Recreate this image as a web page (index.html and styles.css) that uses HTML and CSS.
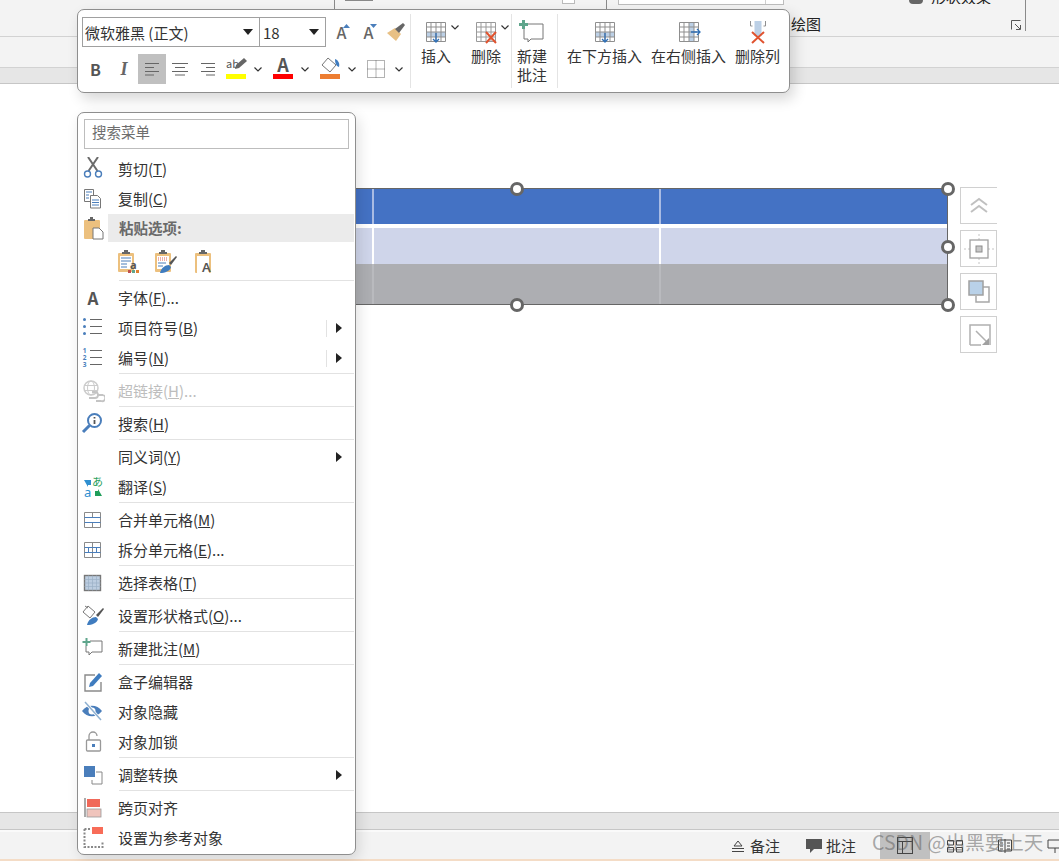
FILE: index.html
```html
<!DOCTYPE html>
<html lang="zh-CN">
<head>
<meta charset="utf-8">
<title>表格右键菜单</title>
<link rel="stylesheet" href="styles.css">
</head>
<body>
<div class="app">
  <header class="ribbon">
    <div class="rb-sec rb-a"></div>
    <div class="rb-sec rb-b"><span class="rb-stub"></span><span class="rb-mini"></span></div>
    <div class="rb-sec rb-c">
      <div class="rb-top">
        <div class="rb-combo"><span class="rb-combo-btn"></span></div>
        <div class="rb-effect"><span class="rb-dot"></span><span class="rb-clip">形状效果</span></div>
      </div>
      <div class="rb-bottom">
        <span class="rb-label">绘图</span>
        <svg class="rb-launch" width="12" height="12" viewBox="0 0 12 12"><path d="M1.500 10.500V1.500H10.500M5 5l5 5M10.500 6v4.500H6" fill="none" stroke="#555" stroke-width="1"/></svg>
      </div>
    </div>
  </header>
  <div class="subbar"></div>
  <div class="hscroll"></div>

  <main class="canvas">
    <div class="shape">
      <div class="trow r1"><i></i><i></i><i></i></div>
      <div class="trow r2"><i></i><i></i><i></i></div>
      <div class="trow r3"><i></i><i></i><i></i></div>
      <span class="h h-tc"></span><span class="h h-tr"></span><span class="h h-mr"></span><span class="h h-bc"></span><span class="h h-br"></span>
    </div>
    <div class="side">
      <div class="sb sb-open"><svg width="24" height="24" viewBox="0 0 24 24"><path d="M4 11l8-6 8 6M4 18l8-6 8 6" fill="none" stroke="#c0c0c0" stroke-width="2"/></svg></div>
      <div class="sb"><svg width="32" height="32" viewBox="0 0 32 32"><path d="M16 1v30M1 16h30" stroke="#c4c4c4" stroke-width="1" stroke-dasharray="2 2"/><rect x="7" y="7" width="18" height="18" fill="#fff" stroke="#a0a0a0" stroke-width="1.300"/><rect x="13" y="13" width="6" height="6" fill="#c8c8c8" stroke="#8c8c8c"/></svg></div>
      <div class="sb"><svg width="28" height="28" viewBox="0 0 28 28"><path d="M18 9h6v15H11v-6" fill="none" stroke="#a8a8a8" stroke-width="1.500"/><rect x="4" y="3" width="14" height="14" fill="#b9d1e8" stroke="#a0a0a0" stroke-width="1.500"/></svg></div>
      <div class="sb"><svg width="28" height="28" viewBox="0 0 28 28"><path d="M5 24V4h20v20" fill="none" stroke="#b0b0b0" stroke-width="1.500"/><path d="M5 24h11M11 10l12 12" fill="none" stroke="#b0b0b0" stroke-width="1.500"/><path d="M24 24h-7l7-7z" fill="#a0a0a0"/></svg></div>
    </div>
  </main>

  <div class="hscroll2"></div>
  <footer class="status">
    <span class="st-item"><svg width="14" height="14" viewBox="0 0 14 14"><path d="M1 9.500h12M1 12.500h12" stroke="#444"/><path d="M3 7l4-5 4 5z" fill="none" stroke="#444"/></svg>备注</span>
    <span class="st-item st-c"><svg width="18" height="16" viewBox="0 0 18 16"><path d="M1 1h16v10H9l-4 4v-4H1z" fill="#555"/></svg>批注</span>
    <span class="st-view st-on"><svg width="18" height="18" viewBox="0 0 18 18"><rect x="1.500" y=".5" width="15" height="16" fill="none" stroke="#444"/><path d="M1.500 4.500h15M6.500 4.500v12" stroke="#444"/></svg></span>
    <span class="st-view st-sort"><svg width="18" height="14" viewBox="0 0 18 14"><path d="M1.500 1.500h6v4.500h-6zM10.500 1.500h6v4.500h-6zM1.500 8.500h6v4.500h-6zM10.500 8.500h6v4.500h-6z" fill="none" stroke="#444"/></svg></span>
    <span class="st-view"><svg width="16" height="18" viewBox="0 0 16 18"><path d="M8 2v14M8 3H1.500v11H8M8 3h6.500v11H8M3 6h3M3 9h3M3 12h3M10 6h3M10 9h3M10 12h3" fill="none" stroke="#444"/></svg></span>
    <span class="st-view st-last"><svg width="18" height="18" viewBox="0 0 18 18"><path d="M2 3h14v8H2zM9 11v5" fill="none" stroke="#444"/></svg></span>
  </footer>
  <div class="st-edge"></div>
</div>

<div class="watermark">CSDN @出黑要上天</div>

<section class="mini">
  <div class="fmt">
    <div class="fmt-row">
      <div class="combo combo-font"><span>微软雅黑 (正文)</span><b class="caret"></b></div>
      <div class="combo combo-size"><span>18</span><b class="caret"></b></div>
      <span class="grow"><em class="aa">A</em><svg class="aa-tri" width="7" height="4" viewBox="0 0 7 4"><path d="M0 4l3.500-4L7 4z" fill="#4a7ebb"/></svg></span>
      <span class="grow"><em class="aa">A</em><svg class="aa-tri" width="7" height="4" viewBox="0 0 7 4"><path d="M0 0l3.500 4L7 0z" fill="#4a7ebb"/></svg></span>
      <span class="brush"><svg width="20" height="20" viewBox="0 0 20 20"><path d="M1 11l8-5 6 6-5 7z" fill="#e8c084"/><path d="M9 7l8-6 2 2-6 8z" fill="#666"/></svg></span>
    </div>
    <div class="fmt-row row2">
      <span class="tb tb-b">B</span>
      <span class="tb tb-i">I</span>
      <span class="tb tb-on"><svg width="16" height="14" viewBox="0 0 16 14"><path d="M1 1.500h14M1 5.500h9M1 9.500h14M1 13h9" stroke="#666"/></svg></span>
      <span class="tb"><svg width="16" height="14" viewBox="0 0 16 14"><path d="M0 1.500h16M3 5.500h10M0 9.500h16M3 13h10" stroke="#666"/></svg></span>
      <span class="tb"><svg width="16" height="14" viewBox="0 0 16 14"><path d="M1 1.500h14M6 5.500h9M1 9.500h14M6 13h9" stroke="#666"/></svg></span>
      <span class="tb tb-col"><em class="ab">ab</em><svg class="ab-pen" width="14" height="14" viewBox="0 0 14 14"><path d="M1 12l1-4 8-7 3 3-8 7z" fill="#666"/></svg><u class="bar bar-y"></u></span>
      <span class="chev"><svg width="8" height="5" viewBox="0 0 8 5"><path d="M.5.500L4 4 7.500.500" fill="none" stroke="#333" stroke-width="1.200"/></svg></span>
      <span class="tb tb-col gap3"><em class="fa">A</em><u class="bar bar-r"></u></span>
      <span class="chev"><svg width="8" height="5" viewBox="0 0 8 5"><path d="M.5.500L4 4 7.500.500" fill="none" stroke="#333" stroke-width="1.200"/></svg></span>
      <span class="tb tb-col gap3"><svg class="fill" width="20" height="17" viewBox="0 0 20 17"><path d="M8 1l8 7-6 7-8-7z" fill="#fff" stroke="#777"/><path d="M15 2c3 1 5 4 4 8-3-1-4-4-4-8z" fill="#3f7cbf"/></svg><u class="bar bar-o"></u></span>
      <span class="chev"><svg width="8" height="5" viewBox="0 0 8 5"><path d="M.5.500L4 4 7.500.500" fill="none" stroke="#333" stroke-width="1.200"/></svg></span>
      <span class="tb gap2"><svg width="18" height="18" viewBox="0 0 18 18"><path d="M.5.500h17v17H.5zM9 .5v17M.5 9h17" fill="none" stroke="#666" stroke-dasharray="1 1"/></svg></span>
      <span class="chev"><svg width="8" height="5" viewBox="0 0 8 5"><path d="M.5.500L4 4 7.500.500" fill="none" stroke="#333" stroke-width="1.200"/></svg></span>
    </div>
  </div>

  <div class="tg tg-ins">
    <div class="tbtn tbtn-w">
      <span class="ti"><svg width="24" height="24" viewBox="0 0 24 24"><rect x="2.500" y="12" width="19" height="5" fill="#bcd0e6"/><path d="M2.500 2.500h19v19h-19zM2.500 7h19M2.500 12h19M2.500 17h19M7 2.500v19M12 2.500v19M17 2.500v19" fill="none" stroke="#8f8f8f"/><path d="M12 13v9M9 19l3 3 3-3" fill="none" stroke="#2f6fb5" stroke-width="1.300"/></svg><svg class="tchev" width="8" height="5" viewBox="0 0 8 5"><path d="M.5.500L4 4 7.500.500" fill="none" stroke="#333" stroke-width="1.200"/></svg></span>
      <span class="tl">插入</span>
    </div>
    <div class="tbtn tbtn-w">
      <span class="ti"><svg width="24" height="24" viewBox="0 0 24 24"><path d="M2.500 2.500h19v19h-19zM2.500 7h19M2.500 12h19M2.500 17h19M7 2.500v19M12 2.500v19M17 2.500v19" fill="none" stroke="#9a9a9a"/><path d="M12 12l10 11M22 12L12 23" stroke="#e0532f" stroke-width="2"/></svg><svg class="tchev" width="8" height="5" viewBox="0 0 8 5"><path d="M.5.500L4 4 7.500.500" fill="none" stroke="#333" stroke-width="1.200"/></svg></span>
      <span class="tl">删除</span>
    </div>
  </div>
  <div class="tg tg-new">
    <div class="tbtn">
      <span class="ti"><svg width="26" height="24" viewBox="0 0 26 24"><path d="M9 4h15v15H12l-3 3v-3H5V9" fill="#fff" stroke="#777"/><path d="M4.500 0v9M0 4.500h9" stroke="#5fa58c" stroke-width="3"/></svg></span>
      <span class="tl">新建<br>批注</span>
    </div>
  </div>
  <div class="tg tg-row">
    <div class="tbtn">
      <span class="ti"><svg width="24" height="24" viewBox="0 0 24 24"><rect x="2.500" y="12" width="19" height="5" fill="#bcd0e6"/><path d="M2.500 2.500h19v19h-19zM2.500 7h19M2.500 12h19M2.500 17h19M7 2.500v19M12 2.500v19M17 2.500v19" fill="none" stroke="#8f8f8f"/><path d="M12 13v9M9 19l3 3 3-3" fill="none" stroke="#2f6fb5" stroke-width="1.300"/></svg></span>
      <span class="tl">在下方插入</span>
    </div>
    <div class="tbtn">
      <span class="ti"><svg width="24" height="24" viewBox="0 0 24 24"><rect x="12" y="2.500" width="5" height="19" fill="#bcd0e6"/><path d="M2.500 2.500h19v19h-19zM2.500 7h19M2.500 12h19M2.500 17h19M7 2.500v19M12 2.500v19M17 2.500v19" fill="none" stroke="#8f8f8f"/><path d="M14 12h9M20 9l3 3-3 3" fill="#fff" stroke="#2f6fb5" stroke-width="1.300"/></svg></span>
      <span class="tl">在右侧插入</span>
    </div>
    <div class="tbtn">
      <span class="ti"><svg width="24" height="24" viewBox="0 0 24 24"><rect x="8.500" y="1" width="7" height="15" fill="#bcd0e6"/><path d="M4.500 6V1M19.500 6V1M4.500 6h2M19.500 6h-2" fill="none" stroke="#8f8f8f"/><path d="M6 12l12 11M18 12L6 23" stroke="#e0532f" stroke-width="2"/></svg></span>
      <span class="tl">删除列</span>
    </div>
  </div>
</section>

<nav class="ctx">
  <div class="search">搜索菜单</div>

  <div class="item"><span class="ico"><svg width="24" height="24" viewBox="0 0 24 24"><path d="M7.500 14L17 0M16.500 14L7 0" stroke="#6b6b6b" stroke-width="2"/><circle cx="6.500" cy="17" r="3" fill="none" stroke="#4a7ebb" stroke-width="1.400"/><circle cx="17.500" cy="17" r="3" fill="none" stroke="#4a7ebb" stroke-width="1.400"/></svg></span><span class="lbl">剪切(<u>T</u>)</span></div>
  <div class="item"><span class="ico"><svg width="24" height="24" viewBox="0 0 24 24"><path d="M3.500 2.500h9v12h-9z" fill="#fff" stroke="#777"/><path d="M9.500 8.500h7l3 3v9.500h-10z" fill="#fff" stroke="#777"/><path d="M5 5h6M5 8h3M5 11h3M11 13h7M11 15.500h7M11 18h7" stroke="#4a7ebb"/></svg></span><span class="lbl">复制(<u>C</u>)</span></div>
  <div class="item item-head"><span class="ico"><svg width="24" height="24" viewBox="0 0 24 24"><rect x="3" y="4" width="16" height="19" rx="1" fill="#ecc07e"/><path d="M7 5V3h2V1h3v2h2v2z" fill="#666"/><path d="M12 12h6l4 4v7H12z" fill="#fff" stroke="#777"/></svg></span><span class="head">粘贴选项:</span></div>
  <div class="pastes">
    <svg width="24" height="24" viewBox="0 0 24 24"><rect x="2" y="3" width="16" height="19" rx="1" fill="#ecc07e"/><rect x="4" y="6" width="12" height="13" fill="#fff"/><path d="M6 4V2h2V0h4v2h2v2z" fill="#666"/><path d="M5 8h10M5 11h10M5 14h6M5 17h6" stroke="#4a7ebb"/><rect x="12" y="20" width="3" height="3" fill="#c0504d"/><rect x="16" y="20" width="3" height="3" fill="#5fa58c"/><rect x="20" y="20" width="3" height="3" fill="#e08030"/><text x="14" y="19" class="svgt">a</text></svg>
    <svg width="24" height="24" viewBox="0 0 24 24"><rect x="1" y="3" width="16" height="19" rx="1" fill="#ecc07e"/><rect x="3" y="6" width="12" height="13" fill="#fff"/><path d="M5 4V2h2V0h4v2h2v2z" fill="#666"/><path d="M4 8h10M4 10h10" stroke="#e06050" stroke-dasharray="1 1"/><path d="M4 13h8M4 16h5" stroke="#4a7ebb"/><path d="M15 13l7-7 1 1-6 8z" fill="#555"/><path d="M6 23c1-5 5-8 9-8l2 2c-1 4-6 6-11 6z" fill="#3f7cbf"/></svg>
    <svg width="24" height="24" viewBox="0 0 24 24"><rect x="3" y="3" width="16" height="20" rx="1" fill="#ecc07e"/><rect x="5" y="6" width="12" height="17" fill="#fff"/><path d="M7 4V2h2V0h4v2h2v2z" fill="#666"/><text x="10" y="22" class="svgA">A</text></svg>
  </div>
  <div class="sep"></div>

  <div class="item"><span class="ico"><em class="ico-a">A</em></span><span class="lbl">字体(<u>F</u>)...</span></div>
  <div class="item"><span class="ico"><svg width="24" height="24" viewBox="0 0 24 24"><path d="M9 3.500h12M9 10.500h12M9 17.500h12" stroke="#666"/><circle cx="3.500" cy="3.500" r="1.500" fill="#4a7ebb"/><circle cx="3.500" cy="10.500" r="1.500" fill="#4a7ebb"/><circle cx="3.500" cy="17.500" r="1.500" fill="#4a7ebb"/></svg></span><span class="lbl">项目符号(<u>B</u>)</span><span class="more more-bar"></span></div>
  <div class="item"><span class="ico"><svg width="24" height="24" viewBox="0 0 24 24"><path d="M9 4.500h12M9 11.500h12M9 18.500h12" stroke="#666"/><text x="3.500" y="7" class="svgn">1</text><text x="3.500" y="14" class="svgn">2</text><text x="3.500" y="21" class="svgn">3</text></svg></span><span class="lbl">编号(<u>N</u>)</span><span class="more more-bar"></span></div>
  <div class="sep"></div>

  <div class="item off"><span class="ico"><svg width="24" height="24" viewBox="0 0 24 24"><circle cx="10" cy="9" r="7" fill="none" stroke="#ccc" stroke-width="1.500"/><ellipse cx="10" cy="9" rx="3.500" ry="7" fill="none" stroke="#ccc"/><path d="M3 6.500h14M3 11.500h14" stroke="#ccc"/><path d="M8 19h6a3 3 0 0 0 0-6h-3M22 16h-6M15 22h5a3 3 0 0 0 2-6" fill="none" stroke="#c4c4c4" stroke-width="1.800"/></svg></span><span class="lbl">超链接(<u>H</u>)...</span></div>
  <div class="sep"></div>

  <div class="item"><span class="ico"><svg width="24" height="24" viewBox="0 0 24 24"><circle cx="13.500" cy="8.500" r="6.500" fill="#fff" stroke="#4a7ebb" stroke-width="2"/><path d="M8.500 13.500L2 20" stroke="#4a7ebb" stroke-width="3"/><path d="M13.500 8v4M13.500 5v1.500" stroke="#555" stroke-width="1.800"/></svg></span><span class="lbl">搜索(<u>H</u>)</span></div>
  <div class="sep"></div>

  <div class="item"><span class="ico"></span><span class="lbl">同义词(<u>Y</u>)</span><span class="more"></span></div>
  <div class="item"><span class="ico"><svg width="24" height="24" viewBox="0 0 24 24"><path d="M3 5h7v5H7v2z" fill="#2f8fd0"/><text x="3" y="22" class="svgtr">a</text><text x="11" y="11" class="svgtg">あ</text><path d="M21 21h-7v-5h3v-2z" fill="#1f9e5a"/></svg></span><span class="lbl">翻译(<u>S</u>)</span></div>
  <div class="sep"></div>

  <div class="item"><span class="ico"><svg width="24" height="24" viewBox="0 0 24 24"><path d="M3.500 4.500h16v15h-16zM11.500 4.500v5M11.500 14.500v5" fill="none" stroke="#8a8a8a"/><path d="M3.500 9.500h16M3.500 14.500h16" stroke="#4a7ebb"/></svg></span><span class="lbl">合并单元格(<u>M</u>)</span></div>
  <div class="item"><span class="ico"><svg width="24" height="24" viewBox="0 0 24 24"><path d="M3.500 4.500h16v15h-16zM11.500 4.500v15" fill="none" stroke="#8a8a8a"/><path d="M3.500 9.500h16M3.500 14.500h16M7.500 9.500v5M15.500 9.500v5" fill="none" stroke="#4a7ebb"/></svg></span><span class="lbl">拆分单元格(<u>E</u>)...</span></div>
  <div class="sep"></div>

  <div class="item"><span class="ico"><svg width="24" height="24" viewBox="0 0 24 24"><rect x="3.500" y="4.500" width="16" height="15" fill="#bccde0" stroke="#777" stroke-width="1.400"/><path d="M3.500 8.500h16M3.500 12h16M3.500 15.500h16M7.500 4.500v15M11.500 4.500v15M15.500 4.500v15" stroke="#9bb0c6" stroke-width=".7"/></svg></span><span class="lbl">选择表格(<u>T</u>)</span></div>
  <div class="sep"></div>

  <div class="item"><span class="ico"><svg width="24" height="24" viewBox="0 0 24 24"><path d="M7 2l7 6-5 6-7-6z" fill="#fff" stroke="#777"/><path d="M4 2l3 2" stroke="#777"/><path d="M15 11l7-7 1 1-6 8z" fill="#555"/><path d="M6 21c1-5 5-8 9-8l2 2c-1 4-6 6-11 6z" fill="#3f7cbf"/></svg></span><span class="lbl">设置形状格式(<u>O</u>)...</span></div>
  <div class="sep"></div>

  <div class="item"><span class="ico"><svg width="24" height="24" viewBox="0 0 24 24"><path d="M9 4h12v11H11l-3 3v-3H5V9" fill="#fff" stroke="#777"/><path d="M5.500 1v8M1.500 5h8" stroke="#5fa58c" stroke-width="2"/></svg></span><span class="lbl">新建批注(<u>M</u>)</span></div>
  <div class="sep"></div>

  <div class="item"><span class="ico"><svg width="24" height="24" viewBox="0 0 24 24"><path d="M20 12v9H4V5h10" fill="none" stroke="#8a8a8a" stroke-width="1.400"/><path d="M8 17l1-4 9-10 3 3-9 10z" fill="#3f7cbf"/></svg></span><span class="lbl">盒子编辑器</span></div>
  <div class="item"><span class="ico"><svg width="24" height="24" viewBox="0 0 24 24"><path d="M1 11c5-7 15-7 20 0-5 7-15 7-20 0z" fill="#4a7ebb"/><circle cx="11" cy="11" r="3.500" fill="#fff"/><path d="M4 2l15 17" stroke="#fff" stroke-width="3"/><path d="M4 2l16 18" stroke="#8fb0d0" stroke-width="1.500"/></svg></span><span class="lbl">对象隐藏</span></div>
  <div class="item"><span class="ico"><svg width="24" height="24" viewBox="0 0 24 24"><path d="M8 10V6a4 4 0 0 1 8 0" fill="none" stroke="#999" stroke-width="1.300"/><rect x="5.500" y="10" width="14" height="11" rx="1" fill="#fff" stroke="#999" stroke-width="1.300"/><rect x="11" y="14" width="3" height="3" fill="#4a7ebb"/></svg></span><span class="lbl">对象加锁</span></div>
  <div class="sep"></div>

  <div class="item"><span class="ico"><svg width="24" height="24" viewBox="0 0 24 24"><path d="M15 9h6v12H11v-4" fill="none" stroke="#888"/><rect x="3" y="3" width="11" height="11" fill="#4a7ebb"/></svg></span><span class="lbl">调整转换</span><span class="more"></span></div>
  <div class="sep"></div>

  <div class="item"><span class="ico"><svg width="24" height="24" viewBox="0 0 24 24"><rect x="3" y="2" width="2" height="19" fill="#aaa"/><rect x="6" y="3" width="13" height="8" fill="#f0695a"/><rect x="6" y="13" width="14" height="8" fill="#f0c4bc" stroke="#999" stroke-width=".8"/></svg></span><span class="lbl">跨页对齐</span></div>
  <div class="item"><span class="ico"><svg width="24" height="24" viewBox="0 0 24 24"><path d="M3.500 3v18h18v-6" fill="none" stroke="#888" stroke-width="2" stroke-dasharray="2 1.500"/><path d="M3.500 3h6" stroke="#888" stroke-width="2" stroke-dasharray="2 1.500"/><rect x="11" y="1" width="11" height="7" fill="#f86c58"/></svg></span><span class="lbl">设置为参考对象</span></div>
</nav>
</body>
</html>
```
FILE: styles.css
```css
* { box-sizing: border-box; }
html, body { margin: 0; height: 861px; overflow: hidden; }
body {
  position: relative;
  background: #fff;
  color: #333;
  font-family: "Noto Sans CJK SC", "Noto Sans", sans-serif;
  font-size: 15px;
}
em { font-style: normal; }

.app { display: flex; flex-direction: column; height: 861px; }

/* ribbon */
.ribbon { display: flex; height: 37px; flex: none; background: #f3f3f3; border-bottom: 1px solid #d2d2d2; }
.rb-sec { height: 31px; border-right: 1px solid #8a8a8a; }
.rb-a { width: 335px; }
.rb-b { width: 272px; display: flex; justify-content: space-between; padding: 0 31px 0 10px; }
.rb-stub { display: block; width: 28px; height: 1px; background: #888; }
.rb-mini { display: block; width: 13px; height: 4px; border: 1px solid #bbb; border-top: 0; background: #fff; }
.rb-c { width: 419px; padding-left: 11px; display: flex; flex-direction: column; }
.rb-top { display: flex; height: 16px; }
.rb-combo { width: 166px; height: 5px; background: #fff; border: 1px solid #bdbdbd; border-top: 0; display: flex; justify-content: flex-end; }
.rb-combo-btn { width: 18px; border-left: 1px solid #d0d0d0; }
.rb-effect { margin-left: 125px; display: flex; height: 4px; gap: 8px; }
.rb-dot { width: 14px; height: 4px; background: #666; border-radius: 0 0 6px 6px; }
.rb-clip { height: 4px; overflow: hidden; display: flex; align-items: flex-end; line-height: 15px; font-size: 15px; color: #222; }
.rb-bottom { display: flex; align-items: center; height: 15px; padding-left: 173px; }
.rb-label { font-size: 15px; color: #222; }
.rb-launch { margin: 3px 0 0 189px; }

.subbar { height: 31px; flex: none; background: #f3f3f3; border-bottom: 1px solid #d2d2d2; }
.hscroll { height: 16px; flex: none; background: #e6e6e6; border-bottom: 1px solid #c6c6c6; }

/* canvas */
.canvas { position: relative; flex: 1; background: #fff; }
.shape {
  position: absolute; left: 356px; top: 104px; width: 592px; height: 117px;
  border: solid #666; border-width: 1px 1px 1px 0;
  display: flex; flex-direction: column;
}
.trow { display: grid; grid-template-columns: 18px 287px 1fr; }
.trow i { display: block; border-right: 2px solid; }
.trow i:last-child { border-right: 0; }
.r1 { height: 35px; background: #4472c4; }
.r1 i { border-color: #a9bbe3; }
.r2 { height: 40px; background: #cfd5ea; border-top: 4px solid #fff; }
.r2 i { border-color: #fff; }
.r3 { flex: 1; background: #adaeb2; }
.r3 i { border-color: #b9babe; }
.h { position: absolute; width: 14px; height: 14px; border: 3px solid #666; border-radius: 50%; background: #fff; }
.h-tc { left: 154px; top: -7px; }
.h-tr { right: -8px; top: -7px; }
.h-mr { right: -8px; top: 51px; }
.h-bc { left: 154px; bottom: -8px; }
.h-br { right: -8px; bottom: -8px; }

.side { position: absolute; left: 960px; top: 103px; display: flex; flex-direction: column; gap: 6px; }
.sb { width: 37px; height: 37px; border: 1px solid #d0d0d0; display: flex; align-items: center; justify-content: center; background: #fff; }
.sb-open { border-right: 0; }

/* bottom */
.hscroll2 { height: 18px; flex: none; background: #e6e6e6; border-top: 1px solid #c6c6c6; border-bottom: 1px solid #c6c6c6; }
.status {
  height: 29px; flex: none; background: #f3f3f3; border-top: 2px solid #fafafa;
  display: flex; align-items: stretch; padding-left: 731px; color: #333; overflow: hidden;
}
.st-item { display: flex; align-items: center; gap: 5px; font-size: 15px; flex: none; }
.st-item svg { flex: none; }
.st-c { margin-left: 25px; gap: 3px; }
.st-view { display: flex; align-items: center; justify-content: center; width: 50px; flex: none; }
.st-on { background: #c0c0c0; margin-left: 24px; }
.st-sort { margin-left: 0; }
.st-last { width: 50px; }
.st-edge { height: 2px; flex: none; background: #f4dcc6; }

.watermark { position: absolute; left: 872px; top: 829px; font-size: 19.500px; line-height: 26px; color: rgba(90, 90, 90, .5); white-space: nowrap; }

/* mini toolbar */
.mini {
  position: absolute; left: 77px; top: 9px; width: 713px; height: 84px;
  display: flex; background: #fff; border: 1px solid #8e8e8e; border-radius: 7px;
  box-shadow: 4px 6px 14px rgba(0, 0, 0, .16);
  padding: 4px 0 4px 0;
}
.fmt { width: 332px; padding: 3px 0 0 4px; flex: none; }
.fmt-row { display: flex; align-items: center; height: 30px; }
.row2 { margin-top: 7px; margin-left: -1px; }
.combo { height: 30px; display: flex; align-items: center; justify-content: space-between; border: 1px solid #a0a0a0; padding: 0 5px 0 2px; font-size: 15px; color: #333; }
.combo-font { width: 178px; }
.combo-size { width: 67px; margin-left: -1px; font-size: 15px; padding-left: 3px; }
.caret { width: 0; height: 0; border: 5px solid transparent; border-top: 6px solid #222; border-bottom: 0; margin-right: 1px; }
.grow { position: relative; width: 27px; text-align: center; }
.combo-size + .grow { margin-left: 2px; }
.aa { font-size: 16px; color: #666; font-weight: 500; }
.aa-tri { position: absolute; right: 5px; top: 4px; }
.brush { width: 28px; display: flex; justify-content: center; }
.tb { display: flex; align-items: center; justify-content: center; width: 28px; height: 30px; position: relative; }
.tb-b { width: 29px; font-weight: 700; font-size: 16px; color: #555; }
.tb-i { font-family: "Liberation Serif", serif; font-style: italic; font-weight: 700; font-size: 18px; color: #666; }
.tb-on { background: #c0c0c0; }
.tb-col { flex-direction: column; justify-content: flex-start; }
.ab { font-size: 11px; line-height: 10px; color: #555; position: absolute; left: 4px; top: 4px; }
.ab-pen { position: absolute; right: 2px; top: 3px; }
.bar { display: block; position: absolute; left: 4px; right: 4px; top: 20px; height: 5px; }
.bar-y { background: #ffff00; }
.bar-r { background: #ff0000; }
.bar-o { background: #ed7d31; }
.fa { font-size: 18px; font-weight: 600; line-height: 20px; color: #555; }
.fill { margin-top: 3px; }
.chev { width: 16px; display: flex; justify-content: center; }
.gap3 { margin-left: 3px; }
.gap2 { margin-left: 2px; margin-right: 1px; }

.tg { display: flex; border-left: 1px solid #e4e4e4; }
.tg-ins { width: 101px; }
.tg-new { width: 46px; padding-left: 5px; }
.tg-row { gap: 9px; padding-left: 9px; }
.tbtn { display: flex; flex-direction: column; align-items: center; }
.tbtn-w { width: 50px; }
.ti { height: 26px; margin-top: 6px; display: flex; position: relative; }
.tchev { position: absolute; left: 27px; top: 5px; }
.tl { margin-top: 1px; font-size: 15px; line-height: 18.500px; text-align: center; color: #333; white-space: nowrap; }

/* context menu */
.ctx {
  position: absolute; left: 77px; top: 112px; width: 279px; height: 743px;
  background: #fff; border: 1px solid #8e8e8e; border-radius: 7px;
  box-shadow: 3px 5px 14px rgba(0, 0, 0, .12);
}
.search { margin: 6px 6px 5px 6px; height: 30px; border: 1px solid #bdbdbd; padding-left: 7px; line-height: 24px; color: #6e6e6e; font-size: 14.500px; }
.item { display: flex; align-items: center; height: 30px; position: relative; font-size: 15px; line-height: 20px; }
.item-head { height: 28px; }
.ico { width: 30px; height: 24px; flex: none; display: flex; justify-content: center; align-items: center; margin-right: 10px; }
.lbl { white-space: nowrap; color: #333; }
.lbl u { text-underline-offset: 1px; }
.head { font-weight: 700; color: #6a6a6a; padding-left: 11px; background: #ebebeb; position: absolute; left: 30px; right: 1px; top: 0; bottom: 0; line-height: 28px; font-size: 14.500px; }
.pastes { height: 38px; display: flex; gap: 14px; padding: 8px 0 0 38px; }
.sep { height: 1px; margin: 0 1px 2px 41px; background: #e2e2e2; }
.off .lbl { color: #bdbdbd; }
.ico-a { font-size: 17px; font-weight: 700; color: #555; line-height: 20px; }
.more { position: absolute; right: 13px; top: 10px; width: 0; height: 0; border: 5px solid transparent; border-left: 6px solid #222; border-right: 0; }
.more-bar::before { content: ""; position: absolute; left: -16px; top: -8px; width: 1px; height: 17px; background: #e2e2e2; }

.svgt { font-size: 11px; font-weight: 700; fill: #555; font-family: "Noto Sans", sans-serif; }
.svgA { font-size: 13px; font-weight: 600; fill: #555; font-family: "Noto Sans", sans-serif; }
.svgn { font-size: 6.500px; font-weight: 700; fill: #4a7ebb; font-family: "Noto Sans", sans-serif; text-anchor: middle; }
.svgtr { font-size: 13px; fill: #2f8fd0; font-family: "Noto Sans", sans-serif; }
.svgtg { font-size: 11px; fill: #1f9e5a; font-family: "Noto Sans CJK JP", sans-serif; }
```
